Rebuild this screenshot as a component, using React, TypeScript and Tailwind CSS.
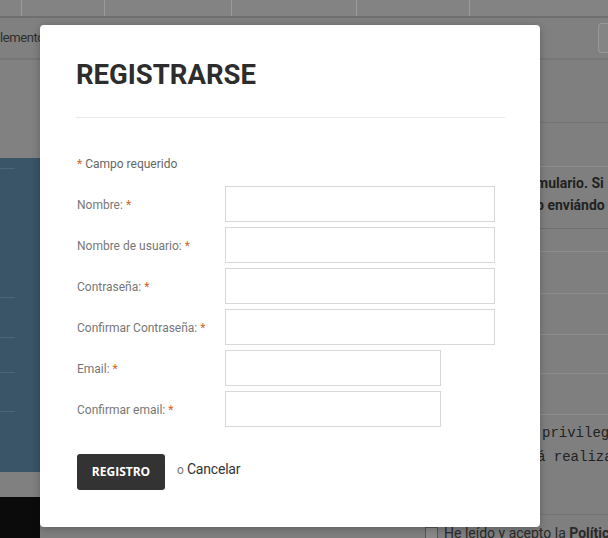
import { FC } from "react"

const fields = [
  { label: "Nombre:", wide: true },
  { label: "Nombre de usuario:", wide: true },
  { label: "Contraseña:", wide: true },
  { label: "Confirmar Contraseña:", wide: true },
  { label: "Email:", wide: false },
  { label: "Confirmar email:", wide: false },
]

const Req = () => <span className="text-[#d0692a]">*</span>

const Backdrop: FC = () => {
  return (
    <div className="flex h-[538px] w-[608px] flex-col overflow-hidden bg-[#7f7f7f] font-['Roboto',sans-serif]">
      {/* top bar */}
      <div className="flex h-[18px] shrink-0 border-b-2 border-[#6f6f6f] bg-[#838383]">
        <div className="w-[22px] border-r border-[#9a9a9a]" />
        <div className="w-[83px] border-r border-[#9a9a9a]" />
        <div className="w-[127px] border-r border-[#9a9a9a]" />
        <div className="w-[125px] border-r border-[#9a9a9a]" />
        <div className="w-[113px] border-r border-[#9a9a9a]" />
        <div className="grow" />
      </div>
      <div className="flex h-[42px] shrink-0 items-center justify-between border-b-2 border-[#767676] bg-[#808080]">
        <span className="text-[13px] tracking-[-0.4px] text-[#2e2e2e]">lementos</span>
        <div className="h-[30px] w-[10px] rounded-l-sm border border-r-0 border-[#999] bg-[#858585]" />
      </div>
      <div className="flex grow">
        {/* left column */}
        <div className="flex w-[40px] shrink-0 flex-col">
          <div className="h-[98px] shrink-0 bg-[#818181]" />
          <div className="flex h-[314px] shrink-0 flex-col bg-[#3a5468]">
            <div className="mt-[10px] h-px w-[15px] bg-[#4b6579]" />
            <div className="mt-[128px] h-px w-[15px] bg-[#4b6579]" />
            <div className="mt-[39px] h-px w-[15px] bg-[#4b6579]" />
            <div className="mt-[34px] h-px w-[15px] bg-[#4b6579]" />
            <div className="mt-[38px] h-px w-[15px] bg-[#4b6579]" />
          </div>
          <div className="h-[25px] shrink-0 bg-[#808080]" />
          <div className="grow bg-[#0b0b0b]" />
        </div>
        <div className="grow" />
        {/* right column */}
        <div className="flex w-[188px] shrink-0 flex-col">
          <div className="h-[63px] shrink-0 border-b border-[#747474]" />
          <div className="h-[44px] shrink-0 border-b border-[#8c8c8c]" />
          <div className="flex h-[61px] shrink-0 flex-col overflow-hidden pt-[5px] pl-[118px] text-[14px] leading-[22px] font-bold whitespace-nowrap text-[#222]">
            <span className="-ml-[2px]">mulario. Si</span>
            <span className="-ml-[2px]">o enviándo</span>
          </div>
          <div className="h-[24px] shrink-0 border-t border-[#6f6f6f] border-b border-b-[#8c8c8c]" />
          <div className="h-[42px] shrink-0 border-b border-[#8c8c8c]" />
          <div className="h-[41px] shrink-0 border-b border-[#8c8c8c]" />
          <div className="h-[39px] shrink-0 border-b border-[#8c8c8c]" />
          <div className="h-[41px] shrink-0 border-b border-[#8c8c8c]" />
          <div className="flex h-[100px] shrink-0 flex-col overflow-hidden border-b border-[#747474] pt-[6px] pl-[118px] font-['Liberation_Mono',monospace] text-[14px] leading-[24px] whitespace-nowrap text-[#222]">
            <span className="ml-[4px]">privileg</span>
            <span className="-ml-[1px]">á realiza</span>
          </div>
          <div className="flex items-center gap-[6px] pt-[8px] pl-[5px] text-[14px] whitespace-nowrap text-[#2a2a2a]">
            <span className="inline-block h-[13px] w-[13px] shrink-0 border border-[#555] bg-[#8a8a8a]" />
            <span>
              He leído y acepto la <b>Política</b>
            </span>
          </div>
        </div>
      </div>
    </div>
  )
}

const RegisterModal: FC = () => {
  return (
    <div className="absolute top-[25px] left-[40px] flex h-[502px] w-[500px] flex-col rounded-[4px] bg-white px-[36px] shadow-[0_2px_8px_rgba(0,0,0,0.25)] font-['Roboto',sans-serif]">
      <h1 className="mt-[34px] font-['Roboto',sans-serif] text-[27.5px] leading-[32px] font-bold text-[#2d2d2d]">
        REGISTRARSE
      </h1>
      <div className="mt-[26px] mr-[-1px] h-px bg-[#e8e8e8]" />
      <div className="mt-[38px] pl-[1px] text-[12px] leading-[16px] text-[#666]">
        <Req /> Campo requerido
      </div>
      <div className="mt-[14px] flex flex-col gap-[5px]">
        {fields.map((f) => (
          <div key={f.label} className="flex items-center">
            <label className="w-[149px] shrink-0 pt-[2px] pl-[1px] text-[12px] text-[#777]">
              {f.label} <Req />
            </label>
            <input
              type="text"
              className={
                f.wide
                  ? "h-[36px] w-[270px] border border-[#d8d8d8] bg-white outline-none"
                  : "h-[36px] w-[216px] border border-[#d8d8d8] bg-white outline-none"
              }
            />
          </div>
        ))}
      </div>
      <div className="mt-[27px] flex items-start gap-[12px] pl-[1px]">
        <button className="h-[36px] w-[88px] rounded-[3px] bg-[#333] font-['Open_Sans',sans-serif] text-[12px] font-bold text-white">
          REGISTRO
        </button>
        <div className="mt-[5px] text-[14px] tracking-[-0.2px] text-[#333]">
          <span className="text-[12px] text-[#777]">o</span> Cancelar
        </div>
      </div>
    </div>
  )
}

export default function App() {
  return (
    <div className="relative h-[538px] w-[608px] overflow-hidden">
      <Backdrop />
      <RegisterModal />
    </div>
  )
}
